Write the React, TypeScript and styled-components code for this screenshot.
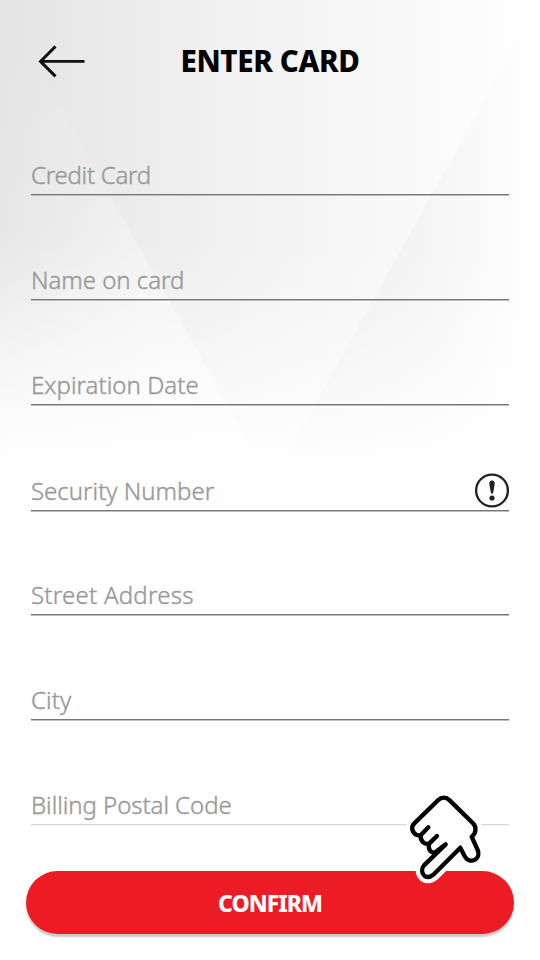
import React from "react";
import styled, { createGlobalStyle } from "styled-components";

const GlobalStyle = createGlobalStyle`
  * { box-sizing: border-box; }
  body { margin: 0; background: #fff; }
`;

const Screen = styled.main`
  position: relative;
  width: 540px;
  height: 960px;
  overflow: hidden;
  background: #fff;
  font-family: "Noto Sans", sans-serif;
`;

const Backdrop = styled.svg`
  position: absolute;
  inset: 0;
`;

const Content = styled.div`
  position: relative;
  display: flex;
  flex-direction: column;
`;

const Header = styled.header`
  display: grid;
  grid-template-columns: 1fr auto 1fr;
  align-items: center;
  height: 90px;
  padding: 32px 38px 0;
`;

const BackButton = styled.button`
  display: flex;
  width: 48px;
  padding: 0;
  border: 0;
  background: none;
`;

const Title = styled.h1`
  margin: 0;
  color: #000;
  font-size: 29.5px;
  font-weight: 800;
  line-height: 36px;
  letter-spacing: -0.35px;
  white-space: nowrap;
`;

const Form = styled.form`
  display: flex;
  flex-direction: column;
  padding: 0 31px;
`;

const Field = styled.div<{ $height: number; $faded?: boolean }>`
  display: flex;
  justify-content: space-between;
  align-items: flex-end;
  height: ${(p) => p.$height}px;
  border-bottom: 1px solid ${(p) => (p.$faded ? "#d9d9d9" : "#777")};
  box-shadow: 0 1px 0 ${(p) => (p.$faded ? "#f0f0f0" : "#bdbdbd")};
`;

const Label = styled.label<{ $tracking?: number }>`
  padding-bottom: 3px;
  color: #999;
  font-size: 24px;
  font-weight: 300;
  -webkit-text-stroke: 0.4px #999;
  line-height: 32px;
  letter-spacing: ${(p) => p.$tracking ?? 0}px;
  white-space: nowrap;
`;

const InfoIcon = styled.svg`
  margin-bottom: 2px;
`;

const Footer = styled.footer`
  position: relative;
  padding: 45.5px 26px 0;
`;

const ConfirmButton = styled.button`
  width: 488px;
  height: 63px;
  padding: 2px 0 0;
  border: 0;
  border-radius: 32px;
  background: #ed1c24;
  box-shadow: 0 3px 2px rgba(0, 0, 0, 0.22);
  color: #fff;
  font-family: inherit;
  font-size: 23px;
  font-weight: 800;
  line-height: 32px;
  letter-spacing: -1px;
`;

const Pointer = styled.svg`
  position: absolute;
  left: 390px;
  top: -45px;
`;

const fields = [
  { label: "Credit Card", tracking: -0.25, height: 105 },
  { label: "Name on card", tracking: -0.03, height: 105 },
  { label: "Expiration Date", tracking: 0.05, height: 105 },
  { label: "Security Number", tracking: 0, height: 106, info: true },
  { label: "Street Address", tracking: 0.25, height: 104 },
  { label: "City", tracking: 0.1, height: 105 },
  { label: "Billing Postal Code", tracking: -0.05, height: 105, faded: true },
];

const handPath =
  "M115 142 L92 166 C90 184 104 194 117 191 L141 168 L117 192 C114 210 122 218 134 218 L167 193 L102 256 C93 266 95 280 103 287 C112 294 122 291 130 284 L211 203 L224 229 C231 242 244 245 255 239 C265 233 268 221 263 210 L245 170 C259 160 260 141 249 130 L179 61 C168 50 155 50 144 61 L73 130 C62 141 66 156 78 164 Q84 167 92 166";

export default function App() {
  return (
    <Screen>
      <GlobalStyle />
      <Backdrop width="540" height="960" viewBox="0 0 540 960" aria-hidden="true">
        <defs>
          <linearGradient id="base" x1="0" x2="540" y1="0" y2="0" gradientUnits="userSpaceOnUse">
            <stop offset="0" stopColor="#e4e4e4" />
            <stop offset="0.2" stopColor="#ebebeb" />
            <stop offset="0.5" stopColor="#f3f3f3" />
            <stop offset="0.8" stopColor="#fafafa" />
            <stop offset="1" stopColor="#fff" />
          </linearGradient>
          <linearGradient id="left" x1="0" x2="180" y1="50" y2="340" gradientUnits="userSpaceOnUse">
            <stop offset="0" stopColor="#fff" stopOpacity="0" />
            <stop offset="0.5" stopColor="#fff" stopOpacity="0.14" />
            <stop offset="1" stopColor="#fff" stopOpacity="0.5" />
          </linearGradient>
          <linearGradient id="right" x1="300" x2="540" y1="0" y2="0" gradientUnits="userSpaceOnUse">
            <stop offset="0" stopColor="#ededed" />
            <stop offset="0.5" stopColor="#f4f4f4" />
            <stop offset="0.8" stopColor="#fbfbfb" />
            <stop offset="1" stopColor="#fff" />
          </linearGradient>
          <linearGradient id="fade" x1="0" x2="0" y1="240" y2="475" gradientUnits="userSpaceOnUse">
            <stop offset="0" stopColor="#fff" stopOpacity="0" />
            <stop offset="0.28" stopColor="#fff" stopOpacity="0.2" />
            <stop offset="0.65" stopColor="#fff" stopOpacity="0.62" />
            <stop offset="1" stopColor="#fff" />
          </linearGradient>
        </defs>
        <path d="M0 0H540V480H0Z" fill="url(#base)" />
        <path d="M0 0L270 480H0Z" fill="url(#left)" />
        <path d="M540 0V480H273Z" fill="url(#right)" />
        <path d="M0 230H540V481H0Z" fill="url(#fade)" />
      </Backdrop>
      <Content>
        <Header>
          <BackButton type="button" aria-label="Back">
            <svg width="48" height="34" viewBox="0 0 48 34" fill="none" stroke="#111" strokeWidth="2.9">
              <path d="M46.5 17.4H3M17.5 2.4L2.5 17.4L17.5 32.4" />
            </svg>
          </BackButton>
          <Title>ENTER CARD</Title>
          <span />
        </Header>
        <Form>
          {fields.map((f) => (
            <Field key={f.label} $height={f.height} $faded={f.faded}>
              <Label $tracking={f.tracking}>{f.label}</Label>
              {f.info && (
                <InfoIcon width="35" height="35" viewBox="0 0 35 35">
                  <circle cx="18" cy="17.5" r="15.9" fill="#fff" stroke="#222" strokeWidth="2.3" />
                  <path d="M18 7.5C15.1 7.5 15.2 10 15.5 12.5L17 20.5H19L20.5 12.5C20.8 10 20.9 7.5 18 7.5Z" fill="#222" />
                  <circle cx="18" cy="25" r="2.6" fill="#222" />
                </InfoIcon>
              )}
            </Field>
          ))}
        </Form>
        <Footer>
          <ConfirmButton type="button">CONFIRM</ConfirmButton>
          <Pointer width="120" height="120" viewBox="0 0 360 360" strokeLinecap="round" strokeLinejoin="round" aria-hidden="true">
            <path d={handPath} fill="#fff" stroke="#fff" strokeWidth="38" />
            <path d={handPath} fill="none" stroke="#000" strokeWidth="13" />
          </Pointer>
        </Footer>
      </Content>
    </Screen>
  );
}
